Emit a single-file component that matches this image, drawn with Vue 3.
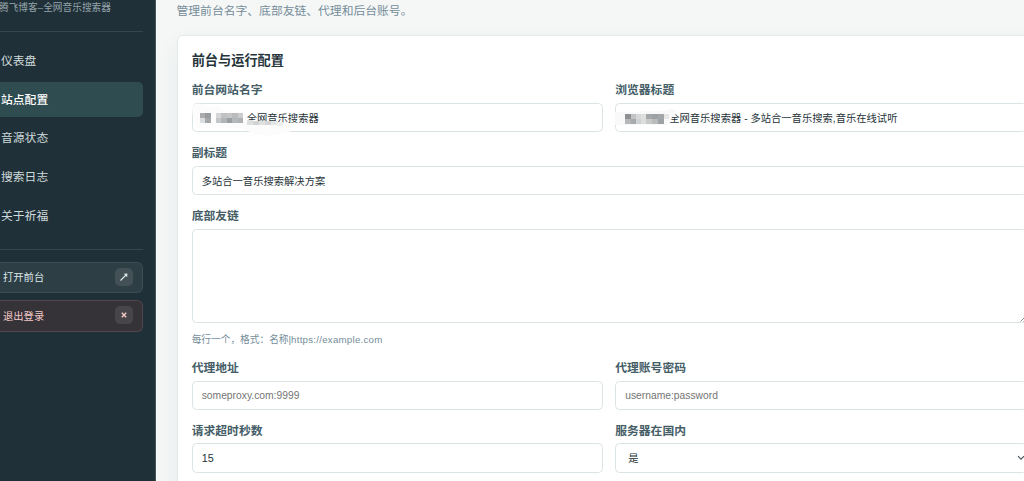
<template>
  <div class="admin" lang="zh-CN">
    <aside class="sidebar">
      <div class="brand">腾飞博客–全网音乐搜索器</div>
      <nav class="nav">
        <a
          v-for="item in menus"
          :key="item.key"
          class="nav-item"
          :class="{ active: item.key === current }"
          @click="current = item.key"
        >{{ item.name }}</a>
      </nav>
      <div class="actions">
        <button class="action">
          <span>打开前台</span>
          <i class="action-icon">
            <svg width="10" height="10" viewBox="0 0 10 10">
              <path d="M1.5 8.5L7.5 2.5" stroke="currentColor" stroke-width="1.1" />
              <path d="M4.8 1.8L8.4 1.6L8.2 5.2Z" fill="currentColor" />
            </svg>
          </i>
        </button>
        <button class="action logout">
          <span>退出登录</span>
          <i class="action-icon">
            <svg width="6" height="6" viewBox="0 0 6 6">
              <path d="M.8 .8L5.2 5.2M5.2 .8L.8 5.2" stroke="currentColor" stroke-width="1.4" />
            </svg>
          </i>
        </button>
      </div>
    </aside>

    <main class="main">
      <p class="desc">管理前台名字、底部友链、代理和后台账号。</p>
      <section class="card">
        <h2>前台与运行配置</h2>
        <div class="form">
          <div class="field">
            <label>前台网站名字</label>
            <div class="control">
              <input v-model="form.siteName" class="site-name" />
              <!-- 打码 -->
              <svg class="mask" width="104" height="34" viewBox="0 0 104 34">
                <path d="M0 2Q8 -1 16 3Q30 2 33 8L53 10L56 18Q66 18 80 19L97 21Q102 26 96 30Q78 35 62 31L50 25H4Q0 14 0 2Z" fill="#fcfcfc" />
                <rect v-for="(b, i) in nameBlocks" :key="i" :x="b[0]" :y="b[1]" :width="b[2]" :height="b[3]" :fill="b[4]" />
              </svg>
            </div>
          </div>
          <div class="field">
            <label>浏览器标题</label>
            <div class="control">
              <input v-model="form.pageTitle" class="page-title" />
              <svg class="mask title-mask" width="62" height="22" viewBox="0 0 62 22">
                <path d="M0 3Q18 4 30 2Q46 3 55 0Q62 0 61 5L57 8Q54 13 54 16H0Z" fill="#f9f9f9" />
                <rect v-for="(b, i) in titleBlocks" :key="i" :x="b[0]" :y="b[1]" :width="b[2]" :height="b[3]" :fill="b[4]" />
              </svg>
            </div>
          </div>
          <div class="field full">
            <label>副标题</label>
            <input v-model="form.subtitle" />
          </div>
          <div class="field full">
            <label>底部友链</label>
            <div class="control">
              <textarea v-model="form.links"></textarea>
              <svg class="grip" width="7" height="7" viewBox="0 0 7 7">
                <path d="M.5 6.5L6.5 .5M3.5 6.5L6.5 3.5" stroke="#777" stroke-width=".8" />
              </svg>
            </div>
            <small>每行一个，格式：名称|<span class="url">https://example.com</span></small>
          </div>
          <div class="field">
            <label>代理地址</label>
            <input v-model="form.proxy" placeholder="someproxy.com:9999" />
          </div>
          <div class="field">
            <label>代理账号密码</label>
            <input v-model="form.proxyAuth" placeholder="username:password" />
          </div>
          <div class="field">
            <label>请求超时秒数</label>
            <input v-model="form.timeout" class="timeout" />
          </div>
          <div class="field">
            <label>服务器在国内</label>
            <div class="control">
              <select v-model="form.inChina">
                <option value="1">是</option>
                <option value="0">否</option>
              </select>
              <svg class="arrow" width="8" height="6" viewBox="0 0 8 6">
                <path d="M1 1.2L4 4.2L7 1.2" fill="none" stroke="#4b5358" stroke-width="1.1" />
              </svg>
            </div>
          </div>
        </div>
      </section>
    </main>
  </div>
</template>

<script setup>
import { ref, reactive } from 'vue'

const current = ref('site')
const menus = [
  { key: 'dashboard', name: '仪表盘' },
  { key: 'site', name: '站点配置' },
  { key: 'source', name: '音源状态' },
  { key: 'log', name: '搜索日志' },
  { key: 'about', name: '关于祈福' }
]

const form = reactive({
  siteName: '全网音乐搜索器',
  pageTitle: '全网音乐搜索器 - 多站合一音乐搜索,音乐在线试听',
  subtitle: '多站合一音乐搜索解决方案',
  links: '',
  proxy: '',
  proxyAuth: '',
  timeout: '15',
  inChina: '1'
})

// x, y, 宽, 高, 颜色
const nameBlocks = [
  [8, 10, 5, 5, '#aaacad'], [13, 10, 6, 5, '#999c9e'],
  [8, 15, 5, 5, '#dcddde'], [13, 15, 6, 5, '#a4a7a9'],
  [24, 10, 5, 5, '#d5d6d7'], [29, 10, 6, 5, '#bfc1c2'], [35, 10, 5, 5, '#c3c5c6'], [40, 10, 6, 5, '#b9bbbd'], [46, 10, 5, 5, '#cbcccd'],
  [24, 15, 5, 5, '#c4c6c7'], [29, 15, 6, 5, '#b2b5b7'], [35, 15, 5, 5, '#999ea0'], [40, 15, 6, 5, '#b5b8ba'], [46, 15, 5, 5, '#aeb2b4'],
  [55, 17, 6, 5, '#dedfdf'], [61, 18, 6, 4, '#d1d3d4'], [67, 18, 6, 4, '#dfe0e0'], [73, 18, 6, 4, '#d5d6d7'], [79, 18, 6, 4, '#e4e5e5'], [85, 19, 6, 4, '#eeeeee']
]
const titleBlocks = [
  [10, 5, 6, 5, '#8d9193'], [16, 5, 5, 5, '#c1c3c4'], [21, 5, 5, 5, '#d7d8d8'], [26, 5, 5, 5, '#dedfdf'], [31, 5, 6, 5, '#a5a8aa'], [37, 5, 6, 5, '#9da1a3'], [43, 5, 6, 5, '#a4a7a9'], [49, 5, 5, 5, '#e6e6e6'],
  [10, 10, 6, 5, '#b5b7b9'], [16, 10, 5, 5, '#a8abad'], [21, 10, 5, 5, '#d0d1d2'], [26, 10, 5, 5, '#dcddde'], [31, 10, 6, 5, '#c8caca'], [37, 10, 6, 5, '#b9bbbc'], [43, 10, 6, 5, '#9ea2a4']
]
</script>

<style>
body {
  overflow: hidden;
}
</style>

<style scoped>
* {
  box-sizing: border-box;
}

.admin {
  display: flex;
  height: 481px;
  overflow: hidden;
  background: #f5f7f7;
  font-family: "Liberation Sans", "Noto Sans CJK SC", sans-serif;
}

.sidebar {
  flex: 0 0 156px;
  padding-right: 12.5px;
  background: #203038;
  border-right: 1px solid #46545b;
}

.brand {
  height: 32px;
  margin-left: -1px;
  border-bottom: 1px solid #36464d;
  color: #94a4aa;
  font-size: 9.7px;
  line-height: 15px;
  white-space: nowrap;
}

.nav {
  display: flex;
  flex-direction: column;
  gap: 4.3px;
  padding: 11.5px 0 15.5px;
}

.nav-item {
  height: 34.5px;
  padding-left: 1px;
  border-radius: 0 5px 5px 0;
  color: #cedadb;
  font-size: 11.8px;
  line-height: 35.6px;
  cursor: pointer;
}

.nav-item.active {
  background: #2f4c50;
  color: #fff;
  font-weight: 500;
  line-height: 37px;
}

.actions {
  display: flex;
  flex-direction: column;
  gap: 7px;
  padding-top: 12px;
  border-top: 1px solid #36464d;
}

.action {
  display: flex;
  align-items: center;
  justify-content: space-between;
  height: 31.5px;
  padding: 0 9px 1px 3px;
  border: 1px solid #3d4d54;
  border-left: none;
  border-radius: 0 6px 6px 0;
  background: #2e3e45;
  color: #dce8e8;
  font-family: inherit;
  font-size: 10.3px;
}

.action.logout {
  border-color: #51474b;
  background: #353238;
  color: #f3c9c6;
}

.action-icon {
  display: flex;
  align-items: center;
  justify-content: center;
  width: 18px;
  height: 18px;
  border-radius: 5px;
  background: #435157;
}

.logout .action-icon {
  background: #48454a;
}

.main {
  flex: 1;
  min-width: 0;
  padding-left: 20.5px;
}

.desc {
  height: 35.4px;
  margin: 0;
  color: #758d99;
  font-size: 11.8px;
  line-height: 22px;
}

.card {
  width: 865px;
  height: 520px;
  padding: 14.2px;
  border: 1px solid #e4eaea;
  border-radius: 6px;
  background: #fff;
  box-shadow: 0 8px 22px rgba(32, 48, 56, .06);
}

h2 {
  height: 19px;
  margin: 0 0 11.6px;
  color: #26343b;
  font-size: 13.2px;
  font-weight: 600;
  line-height: 19px;
}

.form {
  display: grid;
  grid-template-columns: 411.5px 411.5px;
  gap: 12px;
}

.field {
  display: flex;
  flex-direction: column;
}

.field.full {
  grid-column: 1 / 3;
}

label {
  height: 16px;
  margin-bottom: 5.4px;
  color: #445d66;
  font-size: 11.8px;
  font-weight: 600;
  line-height: 18.6px;
}

.control {
  position: relative;
}

input,
select,
textarea {
  display: block;
  width: 100%;
  height: 29.6px;
  padding: 0 9px;
  border: 1px solid #dce3e6;
  border-radius: 4.5px;
  outline: none;
  background: #fff;
  color: #263238;
  font-family: inherit;
  font-size: 10.3px;
}

input::placeholder {
  color: #757575;
}

.site-name {
  padding-left: 54px;
}

.page-title {
  padding-left: 53px;
}

.timeout {
  font-size: 10.8px;
}

textarea {
  height: 94px;
  resize: none;
}

select {
  padding-left: 12px;
  appearance: none;
}

small {
  height: 14px;
  margin: 10.2px 0 .4px;
  color: #758d99;
  font-size: 9.7px;
  line-height: 14px;
}

.url {
  letter-spacing: .25px;
}

.mask {
  position: absolute;
  left: 0;
  top: 0;
}

.title-mask {
  left: 0;
  top: 6px;
}

.grip {
  position: absolute;
  right: 0;
  bottom: 1px;
}

.arrow {
  position: absolute;
  right: 2px;
  top: 12px;
}
</style>
